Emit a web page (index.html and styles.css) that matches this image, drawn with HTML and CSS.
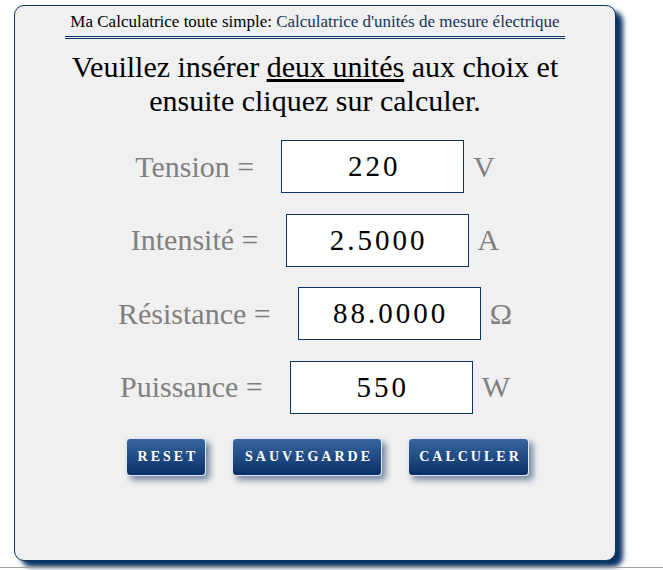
FILE: index.html
```html
<!DOCTYPE html>
<html lang="fr">
<head>
<meta charset="utf-8">
<title>Ma Calculatrice toute simple</title>
<link rel="stylesheet" href="styles.css">
</head>
<body>
<div class="card">
  <div class="title"><span class="title-a">Ma Calculatrice toute simple:</span> <span class="title-b">Calculatrice d'unités de mesure électrique</span></div>
  <p class="intro">Veuillez insérer <u>deux unités</u> aux choix et<br>ensuite cliquez sur calculer.</p>
  <div class="rows">
    <div class="row"><span class="label">Tension =</span><input class="field" type="text" value="220"><span class="unit">V</span></div>
    <div class="row"><span class="label">Intensité =</span><input class="field" type="text" value="2.5000"><span class="unit">A</span></div>
    <div class="row"><span class="label">Résistance =</span><input class="field" type="text" value="88.0000"><span class="unit">Ω</span></div>
    <div class="row"><span class="label">Puissance =</span><input class="field" type="text" value="550"><span class="unit">W</span></div>
  </div>
  <div class="buttons">
    <button class="btn btn-reset">RESET</button>
    <button class="btn btn-save">SAUVEGARDE</button>
    <button class="btn btn-calc">CALCULER</button>
  </div>
</div>
<div class="bottom-line"></div>
</body>
</html>
```
FILE: styles.css
```css
html, body {
  margin: 0;
  padding: 0;
  background: #ffffff;
  font-family: "Liberation Serif", "Times New Roman", serif;
}
body {
  width: 663px;
  height: 570px;
  overflow: hidden;
}
.card {
  box-sizing: border-box;
  margin: 5px 0 0 14px;
  width: 602px;
  height: 556px;
  background: #f0f0f0;
  border: 1px solid #0d3466;
  border-radius: 10px;
  box-shadow: 7px 6px 5px #0b3263;
  display: flex;
  flex-direction: column;
  align-items: center;
}
.title {
  margin-top: 6px;
  width: 500px;
  text-align: center;
  font-size: 17px;
  line-height: 20px;
  padding-bottom: 4px;
  border-bottom: 3px double #0d3466;
}
.title-a { color: #000000; }
.title-b { color: #14365f; }
.intro {
  margin: 11px 0 0 0;
  font-size: 30px;
  line-height: 34px;
  text-align: center;
  color: #000000;
}
.rows {
  margin-top: 22px;
  display: flex;
  flex-direction: column;
  align-items: center;
  gap: 20.6px;
}
.row {
  display: flex;
  align-items: center;
}
.label {
  font-size: 30px;
  color: #808080;
  margin-right: 27px;
}
.unit {
  font-size: 30px;
  color: #808080;
  margin-left: 9px;
  min-width: 20px;
}
.field {
  box-sizing: border-box;
  width: 183px;
  height: 53px;
  border: 1px solid #0d3466;
  background: #ffffff;
  font-family: "Liberation Serif", "Times New Roman", serif;
  font-size: 29px;
  letter-spacing: 3px;
  text-align: center;
  color: #000000;
  padding: 0 0 0 3px;
  margin: 0;
  outline: none;
}
.buttons {
  margin-top: 24px;
  padding-left: 25px;
  display: flex;
  gap: 26px;
}
.btn {
  box-sizing: border-box;
  height: 38px;
  padding: 0 6px 0 10px;
  border: 1px solid #dfe8f2;
  border-radius: 4px;
  background: linear-gradient(#3766a0, #0b3066);
  color: #ffffff;
  font-family: "Liberation Serif", "Times New Roman", serif;
  font-size: 14px;
  font-weight: bold;
  letter-spacing: 3px;
  box-shadow: 4px 4px 6px rgba(11, 50, 99, 0.55);
  cursor: pointer;
}
.btn-reset { width: 80px; }
.btn-save { width: 150px; }
.btn-calc { width: 121px; }
.bottom-line {
  margin-top: 6px;
  height: 1px;
  background: #a0a0a0;
}
```
